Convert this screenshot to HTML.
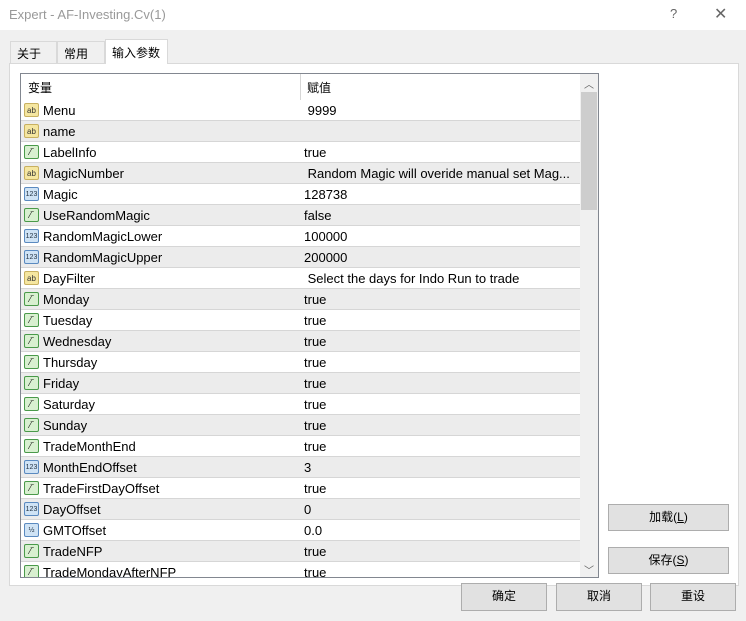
<!DOCTYPE html>
<html><head><meta charset="utf-8"><style>
*{margin:0;padding:0;box-sizing:border-box}
body{width:746px;height:621px;background:#f0f0f0;font-family:"Liberation Sans","Noto Sans CJK SC",sans-serif;font-size:12px;color:#000;position:relative;overflow:hidden}
.abs{position:absolute}
.title{left:0;top:0;width:746px;height:30px;background:#fff;color:#999;font-size:13px;padding:7px 0 0 9px}
.tab{top:41px;height:22px;border:1px solid #d9d9d9;border-bottom:none;background:#f0f0f0;font-size:12px;padding:3px 0 0 6px}
.panel{left:9px;top:63px;width:730px;height:523px;background:#fff;border:1px solid #d9d9d9}
.grid{left:20px;top:73px;width:579px;height:505px;border:1px solid #828790;background:#fff;overflow:hidden}
.row{position:absolute;left:0;width:559px;height:21px;border-bottom:1px solid #d6d6d6;font-size:13px}
.row span{position:absolute;top:3px}
.n{left:22px}.v{left:283px;white-space:pre}
.ic{position:absolute;left:3px;top:3px;width:15px;height:14px;border-radius:2px;font-size:8px;line-height:13px;text-align:center}
.ab{background:#f5e6a0;border:1px solid #c8b060;color:#333}
.bl{background:#d8f0d0;border:1px solid #4a9a4a}
.nm{background:#cfe3f5;border:1px solid #5a8ac0;color:#234;font-size:7px}
.btn{background:#e1e1e1;border:1px solid #adadad;text-align:center;font-size:12px;line-height:25px}
</style></head><body>
<div class="abs title">Expert - AF-Investing.Cv(1)</div>
<div class="abs" style="left:670px;top:6px;color:#666;font-size:13px">?</div>
<div class="abs" style="left:714px;top:4px;color:#666;font-size:16px">✕</div>
<div class="abs panel"></div>
<div class="abs tab" style="left:10px;width:47px">关于</div>
<div class="abs tab" style="left:57px;width:48px">常用</div>
<div class="abs tab" style="left:105px;top:39px;height:25px;width:63px;background:#fff;padding-top:4px">输入参数</div>
<div class="abs grid">
<div class="row" style="top:0;height:25px;border-bottom:none;font-size:12px"><span style="left:7px;top:5px">变量</span><span style="left:286px;top:5px">赋值</span></div>
<div class="abs" style="left:279px;top:0;width:1px;height:505px;background:#d6d6d6"></div>
<div id="rows"></div>
<div class="abs" style="left:559px;top:0;width:18px;height:503px;background:#f0f0f0"></div>
<div class="abs" style="left:560px;top:18px;width:16px;height:118px;background:#cdcdcd"></div>
<div class="abs" style="left:563px;top:2px;color:#606060;font-size:10px">︿</div>
<div class="abs" style="left:563px;top:488px;color:#606060;font-size:10px">﹀</div>
</div>
<div class="abs btn" style="left:608px;top:504px;width:121px;height:27px">加载(<u>L</u>)</div>
<div class="abs btn" style="left:608px;top:547px;width:121px;height:27px">保存(<u>S</u>)</div>
<div class="abs btn" style="left:461px;top:583px;width:86px;height:28px">确定</div>
<div class="abs btn" style="left:556px;top:583px;width:86px;height:28px">取消</div>
<div class="abs btn" style="left:650px;top:583px;width:86px;height:28px">重设</div>
<script>
var d=[["ab","Menu"," 9999"],["ab","name",""],["bl","LabelInfo","true"],["ab","MagicNumber"," Random Magic will overide manual set Mag..."],["nm","Magic","128738"],["bl","UseRandomMagic","false"],["nm","RandomMagicLower","100000"],["nm","RandomMagicUpper","200000"],["ab","DayFilter"," Select the days for Indo Run to trade"],["bl","Monday","true"],["bl","Tuesday","true"],["bl","Wednesday","true"],["bl","Thursday","true"],["bl","Friday","true"],["bl","Saturday","true"],["bl","Sunday","true"],["bl","TradeMonthEnd","true"],["nm","MonthEndOffset","3"],["bl","TradeFirstDayOffset","true"],["nm","DayOffset","0"],["nm","GMTOffset","0.0"],["bl","TradeNFP","true"],["bl","TradeMondayAfterNFP","true"]];
var h="";d.forEach(function(r,i){var t={ab:"ab",bl:"⁄‾",nm:"123"}[r[0]];if(r[1]=="GMTOffset")t="½";
h+='<div class="row" style="top:'+(26+i*21)+'px;background:'+(i%2?'#ececec':'#fff')+'"><div class="ic '+r[0]+'">'+t+'</div><span class="n">'+r[1]+'</span><span class="v">'+r[2]+'</span></div>';});
document.getElementById("rows").innerHTML=h;
</script>
</body></html>
